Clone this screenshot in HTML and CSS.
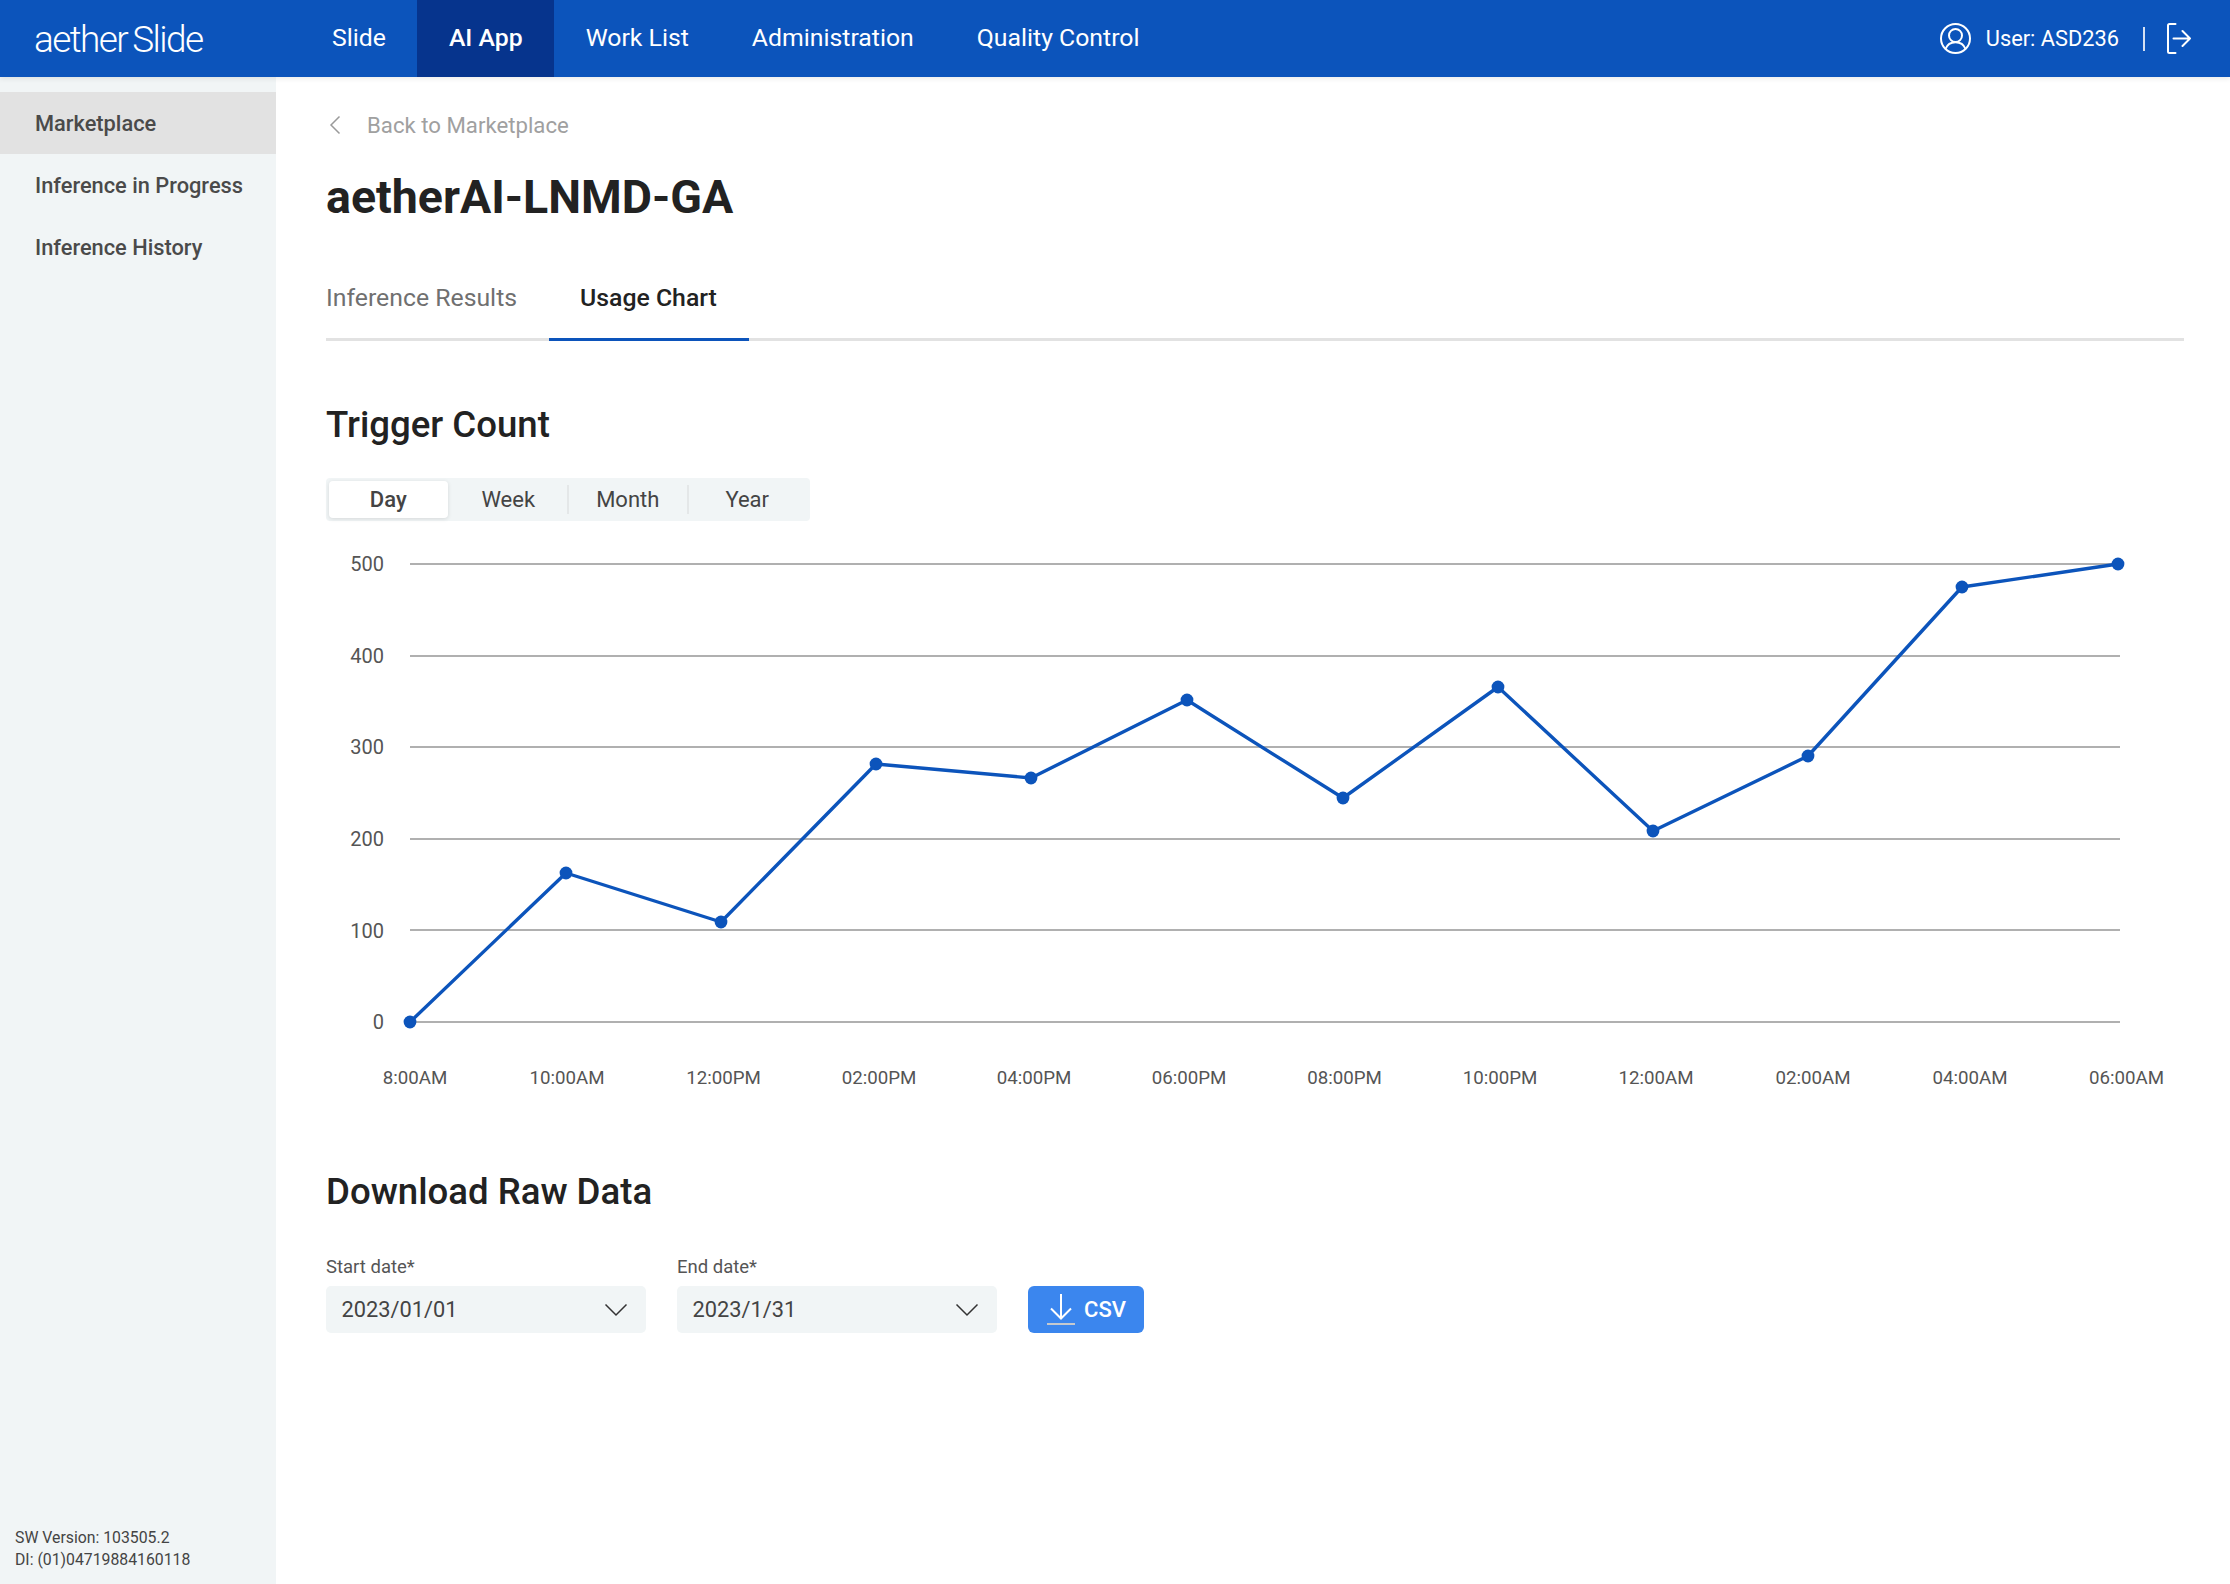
FILE: index.html
```html
<!DOCTYPE html>
<html lang="en">
<head>
<meta charset="utf-8">
<title>aetherAI-LNMD-GA</title>
<link rel="stylesheet" href="styles.css">
</head>
<body>
<header class="topbar">
  <div class="logo">aether<span class="logo-gap">Slide</span></div>
  <nav class="nav">
    <a class="nav-item">Slide</a>
    <a class="nav-item is-active">AI App</a>
    <a class="nav-item">Work List</a>
    <a class="nav-item">Administration</a>
    <a class="nav-item">Quality Control</a>
  </nav>
  <div class="user">
    <svg class="user-icon" viewBox="0 0 31 31" fill="none" stroke="#fff" stroke-width="2"><circle cx="15.500" cy="15.500" r="14.500"/><circle cx="15.500" cy="12.500" r="6.500"/><path d="M5.500 26c1.500-4 5-6.800 10-6.800s8.500 2.800 10 6.800"/></svg>
    <span class="user-name">User: ASD236</span>
    <span class="user-sep"></span>
    <svg class="logout-icon" viewBox="0 0 24 31" fill="none" stroke="#fff" stroke-width="2" stroke-linecap="round" stroke-linejoin="round"><path d="M8.500 1H2.500A1.500 1.500 0 0 0 1 2.500v26A1.500 1.500 0 0 0 2.500 30H8.500"/><path d="M6.500 15.500h16.500M15.500 8 23 15.500 15.500 23"/></svg>
  </div>
</header>
<div class="shell">
  <aside class="sidebar">
    <ul class="side-list">
      <li class="side-item is-current">Marketplace</li>
      <li class="side-item">Inference in Progress</li>
      <li class="side-item">Inference History</li>
    </ul>
    <div class="version">
      <div>SW Version: 103505.2</div>
      <div>DI: (01)04719884160118</div>
    </div>
  </aside>
  <main class="main">
    <div class="back">
      <svg class="back-icon" viewBox="0 0 12 20" fill="none" stroke="#9a9a9a" stroke-width="1.500"><path d="M10.500 1.500 2 10l8.500 8.500"/></svg>
      <span>Back to Marketplace</span>
    </div>
    <h1 class="title">aetherAI-LNMD-GA</h1>
    <div class="tabs">
      <a class="tab">Inference Results</a>
      <a class="tab is-active">Usage Chart</a>
    </div>
    <h2 class="section-title trigger">Trigger Count</h2>
    <div class="segments">
      <span class="seg is-on">Day</span>
      <span class="seg">Week</span>
      <span class="seg seg-line">Month</span>
      <span class="seg seg-line">Year</span>
    </div>
    <svg class="chart" viewBox="326 540 1858 560" width="1858" height="560">
      <g class="grid">
        <line x1="410" x2="2120" y1="564" y2="564"/>
        <line x1="410" x2="2120" y1="656" y2="656"/>
        <line x1="410" x2="2120" y1="747" y2="747"/>
        <line x1="410" x2="2120" y1="839" y2="839"/>
        <line x1="410" x2="2120" y1="930" y2="930"/>
        <line x1="410" x2="2120" y1="1022" y2="1022"/>
      </g>
      <g class="y-labels">
        <text x="384" y="571">500</text>
        <text x="384" y="663">400</text>
        <text x="384" y="754">300</text>
        <text x="384" y="846">200</text>
        <text x="384" y="938">100</text>
        <text x="384" y="1029">0</text>
      </g>
      <polyline class="series" points="410,1022 566,873 721,922 876,764 1031,778 1187,700 1343,798 1498,687 1653,831 1808,756 1962,587 2118,564"/>
      <g class="dots">
        <circle cx="410" cy="1022" r="6.400"/><circle cx="566" cy="873" r="6.400"/><circle cx="721" cy="922" r="6.400"/><circle cx="876" cy="764" r="6.400"/><circle cx="1031" cy="778" r="6.400"/><circle cx="1187" cy="700" r="6.400"/><circle cx="1343" cy="798" r="6.400"/><circle cx="1498" cy="687" r="6.400"/><circle cx="1653" cy="831" r="6.400"/><circle cx="1808" cy="756" r="6.400"/><circle cx="1962" cy="587" r="6.400"/><circle cx="2118" cy="564" r="6.400"/>
      </g>
      <g class="x-labels">
        <text x="415" y="1083.500">8:00AM</text>
        <text x="567" y="1083.500">10:00AM</text>
        <text x="723.500" y="1083.500">12:00PM</text>
        <text x="879" y="1083.500">02:00PM</text>
        <text x="1034" y="1083.500">04:00PM</text>
        <text x="1189" y="1083.500">06:00PM</text>
        <text x="1344.500" y="1083.500">08:00PM</text>
        <text x="1500" y="1083.500">10:00PM</text>
        <text x="1656" y="1083.500">12:00AM</text>
        <text x="1813" y="1083.500">02:00AM</text>
        <text x="1970" y="1083.500">04:00AM</text>
        <text x="2126.500" y="1083.500">06:00AM</text>
      </g>
    </svg>
    <h2 class="section-title download">Download Raw Data</h2>
    <div class="form-row">
      <div class="field">
        <label class="field-label">Start date*</label>
        <div class="select"><span>2023/01/01</span><svg class="chev" viewBox="0 0 24 14" fill="none" stroke="#333" stroke-width="1.500"><path d="M1.500 1.500 12 12 22.500 1.500"/></svg></div>
      </div>
      <div class="field">
        <label class="field-label">End date*</label>
        <div class="select"><span>2023/1/31</span><svg class="chev" viewBox="0 0 24 14" fill="none" stroke="#333" stroke-width="1.500"><path d="M1.500 1.500 12 12 22.500 1.500"/></svg></div>
      </div>
      <button class="csv">
        <svg class="csv-icon" viewBox="0 0 28 31" fill="none" stroke="#fff" stroke-width="2"><path d="M14 0v24.500M4 14.500l10 10 10-10"/><path d="M0 30h28" stroke="#c5c9ce"/></svg>
        <span>CSV</span>
      </button>
    </div>
  </main>
</div>
</body>
</html>
```
FILE: styles.css
```css
* { box-sizing: border-box; }
html, body { margin: 0; padding: 0; }
body {
  width: 2230px;
  height: 1584px;
  overflow: hidden;
  background: #fff;
  font-family: Roboto, "Liberation Sans", sans-serif;
  color: #222;
}
.topbar {
  display: flex;
  align-items: stretch;
  height: 77px;
  background: #0c54bb;
  color: #fff;
  position: relative;
  z-index: 1;
  box-shadow: 0 2px 5px rgba(0, 0, 0, .08);
}
.logo {
  width: 300.500px;
  padding-left: 34px;
  font-size: 37px;
  font-weight: 300;
  letter-spacing: -1.600px;
  line-height: 79px;
}
.logo-gap { margin-left: 5px; }
.nav { display: flex; font-size: 24.800px; }
.nav-item { display: flex; align-items: center; padding: 0 31.500px 3px; }
.nav-item.is-active { background: #06348d; font-weight: 500; }
.user { margin-left: auto; display: flex; align-items: center; padding-right: 39px; font-size: 21.800px; }
.user-icon { width: 31px; height: 31px; margin-right: 15px; }
.user-name { margin-right: 24px; }
.user-sep { width: 2px; height: 24px; background: #d5e0f2; margin-right: 22px; }
.logout-icon { width: 24px; height: 31px; }
.shell { display: flex; height: 1507px; }
.sidebar {
  width: 276px;
  flex: none;
  background: #f1f5f6;
  padding-top: 15px;
  display: flex;
  flex-direction: column;
}
.side-list { list-style: none; margin: 0; padding: 0; }
.side-item {
  height: 62px;
  line-height: 63px;
  padding-left: 35px;
  font-size: 21.800px;
  font-weight: 500;
  color: #4a4a4a;
}
.side-item.is-current { background: #e2e2e2; }
.version {
  margin-top: auto;
  padding: 0 0 14px 15px;
  font-size: 15.800px;
  line-height: 21.500px;
  color: #444;
}
.main { flex: 1; padding: 0 46px 0 50px; }
.back {
  display: flex;
  align-items: center;
  height: 28px;
  margin-top: 34px;
  font-size: 22.200px;
  color: #a0a0a0;
}
.back-icon { width: 12px; height: 20px; margin-right: 26px; margin-left: 3px; }
.title { margin: 28px 0 0; font-size: 46.500px; line-height: 60px; font-weight: 700; color: #222; }
.tabs {
  display: flex;
  height: 114px;
  border-bottom: 3px solid #e2e2e2;
  font-size: 24.800px;
  color: #707070;
}
.tab {
  display: flex;
  align-items: center;
  height: 114px;
  padding: 30px 32px 0 31.500px;
  border-bottom: 3px solid transparent;
}
.tab:first-child { padding-left: 0; padding-right: 31.500px; }
.tab.is-active { color: #222; font-weight: 500; border-bottom-color: #0c54bb; }
.section-title { margin: 0; font-size: 36.600px; line-height: 48px; font-weight: 500; color: #222; }
.trigger { margin-top: 60px; }
.segments {
  display: flex;
  width: 484px;
  height: 43px;
  margin-top: 29px;
  padding: 3px;
  background: #f1f5f6;
  border-radius: 4px;
  font-size: 22px;
  color: #444;
}
.seg { width: 120px; display: flex; align-items: center; justify-content: center; position: relative; }
.seg-line::before {
  content: "";
  position: absolute;
  left: -1px;
  top: 4px;
  bottom: 4px;
  width: 2px;
  background: #e4e7e8;
}
.seg.is-on { width: 119px; margin-right: 1px; background: #fff; border-radius: 4px; font-weight: 500; box-shadow: 0 1px 4px rgba(0, 0, 0, .12); }
.chart { display: block; margin-top: 19px; }
.grid line { stroke: #b0b0b0; stroke-width: 2; }
.y-labels text { font-size: 20px; fill: #555; text-anchor: end; }
.x-labels text { font-size: 18.700px; fill: #555; text-anchor: middle; }
.series { fill: none; stroke: #0c54bb; stroke-width: 3.400; stroke-linejoin: round; }
.dots circle { fill: #0c54bb; }
.download { margin-top: 68px; }
.form-row { display: flex; align-items: flex-end; gap: 31px; margin-top: 39px; }
.field { width: 320px; }
.field-label { display: block; font-size: 18.500px; line-height: 24px; color: #555; margin-bottom: 7px; }
.select {
  display: flex;
  align-items: center;
  justify-content: space-between;
  height: 47px;
  padding: 0 18px 0 15.500px;
  background: #f1f5f6;
  border-radius: 5px;
  font-size: 21.800px;
  color: #444;
}
.chev { width: 24px; height: 14px; }
.csv {
  display: flex;
  align-items: center;
  justify-content: center;
  gap: 9px;
  width: 116px;
  height: 47px;
  padding: 0 0 0 1px;
  border: 0;
  border-radius: 6px;
  background: #3b86ee;
  color: #fff;
  font: 500 22px Roboto, sans-serif;
}
.csv-icon { width: 28px; height: 31px; }
```
